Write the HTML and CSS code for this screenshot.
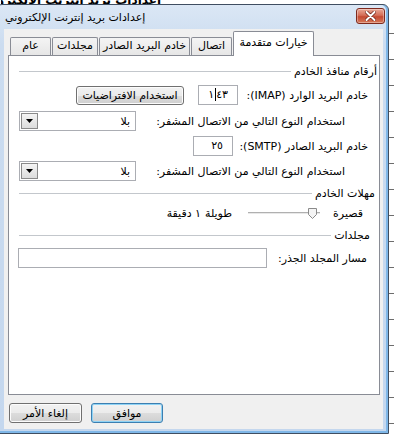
FILE: index.html
```html
<!DOCTYPE html>
<html lang="ar">
<head>
    <meta charset="UTF-8">
    <title>إعدادات بريد إنترنت الإلكتروني</title>
    <link rel="stylesheet" href="styles.css">
</head>
<body>
    <div class="behind-top"><span>إعدادات بريد إنترنت الإلكتروني</span></div>
    <div class="desk">
        <div class="window">
            <div class="titlebar">
                <span class="title">إعدادات بريد إنترنت الإلكتروني</span>
                <button class="close-btn" aria-label="إغلاق">
                    <svg width="11" height="10" viewBox="0 0 11 10">
                        <path d="M1.5 1 L9.5 9 M9.5 1 L1.5 9" stroke="#6b1f14" stroke-width="3.4" stroke-linecap="round"/>
                        <path d="M1.5 1 L9.5 9 M9.5 1 L1.5 9" stroke="#ffffff" stroke-width="2" stroke-linecap="round"/>
                    </svg>
                </button>
            </div>

            <div class="client">
                <!-- tabs, drawn left to right as on screen -->
                <div class="tabs">
                    <div class="tab tab-general">عام</div>
                    <div class="tab tab-folders">مجلدات</div>
                    <div class="tab tab-outgoing">خادم البريد الصادر</div>
                    <div class="tab tab-connection">اتصال</div>
                    <div class="tab tab-active">خيارات متقدمة</div>
                </div>

                <div class="panel">
                    <div class="group-head head-ports">
                        <span>أرقام منافذ الخادم</span>
                        <span class="rule"></span>
                    </div>

                    <div class="row row-port row-imap">
                        <span class="lbl lbl-imap">خادم البريد الوارد (IMAP):</span>
                        <div class="port"><span class="val">١<span class="caret-before">٤٣</span></span></div>
                        <button class="btn btn-defaults">استخدام الافتراضيات</button>
                    </div>

                    <div class="row row-enc">
                        <span class="lbl">استخدام النوع التالي من الاتصال المشفر:</span>
                        <div class="combo">
                            <span class="combo-text">بلا</span>
                            <span class="combo-arrow">
                                <svg width="7" height="4" viewBox="0 0 7 4"><path d="M0 0 H7 L3.5 4 Z" fill="#000"/></svg>
                            </span>
                        </div>
                    </div>

                    <div class="row row-port row-smtp">
                        <span class="lbl lbl-smtp">خادم البريد الصادر (SMTP):</span>
                        <div class="port"><span class="val">٢٥</span></div>
                    </div>

                    <div class="row row-enc">
                        <span class="lbl">استخدام النوع التالي من الاتصال المشفر:</span>
                        <div class="combo">
                            <span class="combo-text">بلا</span>
                            <span class="combo-arrow">
                                <svg width="7" height="4" viewBox="0 0 7 4"><path d="M0 0 H7 L3.5 4 Z" fill="#000"/></svg>
                            </span>
                        </div>
                    </div>

                    <div class="group-head head-timeouts">
                        <span>مهلات الخادم</span>
                        <span class="rule"></span>
                    </div>

                    <div class="row row-slider">
                        <span class="lbl lbl-short">قصيرة</span>
                        <svg class="track" width="72" height="16" viewBox="0 0 72 16">
                            <rect x="0" y="7" width="72" height="1" fill="#b0b0b0"/>
                            <rect x="0" y="8" width="72" height="1" fill="#e8e8e8"/>
                            <path d="M60.5 3.5 H68.5 V9.5 L64.5 13.5 L60.5 9.5 Z" fill="#f4f4f4" stroke="#8a8a8a"/>
                        </svg>
                        <span class="lbl lbl-long">طويلة</span>
                        <span class="lbl lbl-minutes">١ دقيقة</span>
                    </div>

                    <div class="group-head head-folders">
                        <span>مجلدات</span>
                        <span class="rule"></span>
                    </div>

                    <div class="row row-root">
                        <span class="lbl">مسار المجلد الجذر:</span>
                        <div class="textbox"></div>
                    </div>
                </div>

                <div class="footer">
                    <button class="btn btn-ok">موافق</button>
                    <button class="btn btn-cancel">إلغاء الأمر</button>
                </div>
            </div>
        </div>
        <div class="backdrop"></div>
    </div>
</body>
</html>
```

FILE: styles.css
```css
* {
    box-sizing: border-box;
}
body {
    margin: 0;
    width: 394px;
    height: 436px;
    overflow: hidden;
    background-color: #ffffff;
    font-family: "DejaVu Sans", sans-serif;
    font-size: 11px;
    color: #000000;
}

/* bits of the window behind the dialog */
.behind-top {
    height: 4px;
    overflow: hidden;
    padding-left: 1px;
}
.behind-top span {
    display: block;
    height: 4px;
    overflow: hidden;
    font-size: 12px;
    font-weight: bold;
    line-height: 0;
    padding-top: 0;
    white-space: nowrap;
    direction: rtl;
    width: 160px;
}
.desk {
    display: flex;
    height: 432px;
}
.backdrop {
    flex: 1;
    background: repeating-linear-gradient(#ffffff 0, #ffffff 25px, #6d6d6d 25px, #6d6d6d 26px);
    background-position: 0 4px;
}

/* window frame */
.window {
    flex-shrink: 0;
    width: 393px;
    height: 430px;
    margin-left: -4px;
    display: flex;
    flex-direction: column;
    border: 1px solid #3f4e61;
    border-radius: 6px 6px 0 0;
    background: linear-gradient(#dbe7f5, #cbdcf0 40px, #c4d7ee);
    box-shadow: inset -2px 0 #7fb7e8, inset 0 -2px #7fb7e8;
}
.titlebar {
    height: 24px;
    display: flex;
    align-items: center;
    justify-content: space-between;
    padding: 0 3px 0 8px;
}
.title {
    font-size: 11px;
    direction: rtl;
    color: #000000;
}
.close-btn {
    width: 29px;
    height: 16px;
    margin-top: -2px;
    padding: 0;
    display: flex;
    align-items: center;
    justify-content: center;
    border: 1px solid #7e2a1e;
    border-radius: 3px;
    background: linear-gradient(#e9a896, #d46e58 45%, #c44a32 55%, #d67a5c);
    box-shadow: inset 0 0 0 1px rgba(255, 255, 255, 0.35);
}

.client {
    flex: 1;
    margin: 0 5px 4px 7px;
    background-color: #f0f0f0;
    display: flex;
    flex-direction: column;
}

/* tabs */
.tabs {
    height: 26px;
    display: flex;
    align-items: flex-end;
    padding-left: 6px;
}
.tab {
    height: 18px;
    margin-right: 1px;
    border: 1px solid #898c95;
    border-bottom: none;
    border-radius: 2px 2px 0 0;
    background: linear-gradient(#f4f4f4, #e6e6e6);
    text-align: center;
    line-height: 16px;
    white-space: nowrap;
    direction: rtl;
    overflow: hidden;
}
.tab-general { width: 41px; }
.tab-folders { width: 46px; }
.tab-outgoing { width: 91px; }
.tab-connection { width: 41px; }
.tab-active {
    width: 81px;
    height: 25px;
    margin-bottom: -1px;
    position: relative;
    z-index: 1;
    background: #ffffff;
    line-height: 22px;
}

.panel {
    margin-left: 4px;
    width: 372px;
    height: 340px;
    background-color: #ffffff;
    border: 1px solid #898c95;
    direction: rtl;
}

/* group headers with etched rule */
.group-head {
    display: flex;
    align-items: center;
    height: 14px;
    margin-left: 10px;
    white-space: nowrap;
}
.rule {
    flex: 1;
    height: 1px;
    margin-right: 3px;
    background-color: #c3c7cc;
}
.head-ports {
    margin-top: 8px;
    margin-right: 2px;
}
.head-timeouts {
    margin-top: 5px;
    margin-right: 4px;
}
.head-folders {
    margin-top: 7px;
    margin-right: 9px;
}

.row {
    display: flex;
    align-items: center;
    height: 20px;
    white-space: nowrap;
}
.row-port {
    padding-right: 11px;
}
.row-imap {
    margin-top: 7px;
}
.lbl-imap {
    width: 123px;
    margin-left: 7px;
}
.lbl-smtp {
    width: 128px;
    margin-left: 7px;
}
.port {
    width: 40px;
    height: 20px;
    border: 1px solid #abadb3;
    background-color: #ffffff;
    padding-right: 9px;
    line-height: 18px;
}
.val {
    direction: ltr;
    unicode-bidi: isolate;
}
/* text caret sits between the first and second digit */
.caret-before {
    border-left: 1px solid #000000;
    margin-left: 1px;
}

.btn {
    height: 20px;
    padding: 0;
    font-family: "DejaVu Sans", sans-serif;
    font-size: 11px;
    color: #000000;
    border: 1px solid #707070;
    border-radius: 3px;
    background: linear-gradient(#f2f2f2, #ebebeb 50%, #dddddd 50%, #cfcfcf);
    box-shadow: inset 0 0 0 1px #fcfcfc;
}
.btn-defaults {
    width: 108px;
    height: 19px;
    margin-right: 14px;
}

.row-enc {
    margin-top: 6px;
    padding: 0 34px 0 10px;
    justify-content: space-between;
}
.row-enc + .row-port {
    margin-top: 5px;
}
.row-port + .row-enc {
    margin-top: 5px;
}
.row-imap + .row-enc {
    margin-top: 6px;
}
.combo {
    width: 117px;
    height: 20px;
    display: flex;
    align-items: center;
    border: 1px solid #abadb3;
    background-color: #ffffff;
    padding: 1px;
}
.combo-text {
    padding-right: 4px;
}
.combo-arrow {
    margin-right: auto;
    width: 17px;
    height: 16px;
    display: flex;
    align-items: center;
    justify-content: center;
    border: 1px solid #8a8a8a;
    background: linear-gradient(#f4f4f4, #dcdcdc);
}

.row-slider {
    margin-top: 5px;
    height: 16px;
    padding-right: 16px;
}
.lbl-short {
    margin-left: 13px;
}
.lbl-long {
    margin-right: 16px;
}
.lbl-minutes {
    margin-right: 4px;
}

.row-root {
    margin-top: 6px;
    padding: 0 12px 0 9px;
    justify-content: space-between;
}
.textbox {
    width: 249px;
    height: 20px;
    border: 1px solid #abadb3;
    background-color: #ffffff;
}

/* dialog buttons */
.footer {
    display: flex;
    direction: rtl;
    justify-content: flex-end;
    gap: 9px;
    padding: 8px 0 0 5px;
}
.btn-ok {
    width: 72px;
    border-color: #3c7fb1;
    box-shadow: inset 0 0 0 1px #8fd3f5;
}
.btn-cancel {
    width: 73px;
}
```
